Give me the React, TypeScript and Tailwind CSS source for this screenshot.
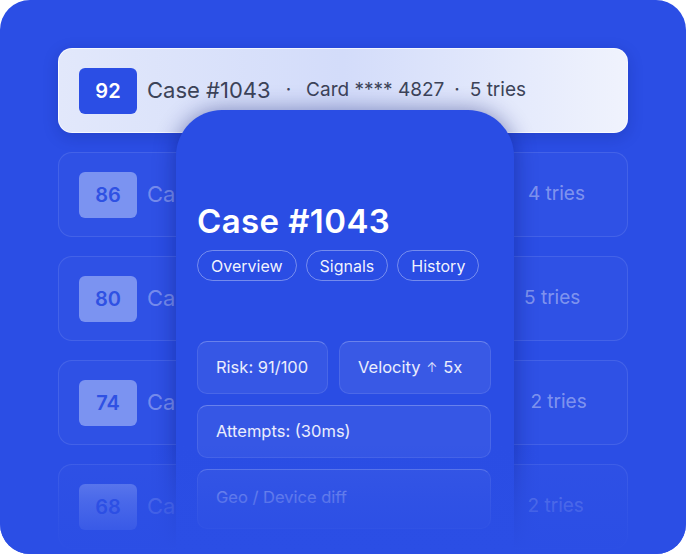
import React from 'react'

type Row = {
  score: number
  caseNo: string
  card: string
  cardWidth: string
  tries: string
}

// the middle of these rows sits behind the detail panel
const rows: Row[] = [
  { score: 86, caseNo: 'Case #1042', card: 'Card **** 3391 · Geo', cardWidth: 'w-[226px]', tries: '4 tries' },
  { score: 80, caseNo: 'Case #1041', card: 'Card **** 7710 · Geo', cardWidth: 'w-[227px]', tries: '5 tries' },
  { score: 74, caseNo: 'Case #1040', card: 'Card **** 5502 · Geo', cardWidth: 'w-[228px]', tries: '2 tries' },
  { score: 68, caseNo: 'Case #1039', card: 'Card **** 1184 · Geo', cardWidth: 'w-[226px]', tries: '2 tries' },
]

export default function App() {
  return (
    <div
      className="w-[686px] h-[554px] bg-white"
      style={{ fontFamily: 'Inter, "Noto Sans", sans-serif' }}
    >
      <div className="relative w-full h-full overflow-hidden rounded-[30px] bg-[#2b4ee5]">
        {/* case list */}
        <div className="flex flex-col gap-[19px] px-[58px] pt-[48px]">
          <div className="flex h-[85px] items-center rounded-[14px] border border-white/70 bg-gradient-to-r from-[#e2e8fb] via-[#d3dcfa] to-[#f0f3fd] px-[20px] shadow-[0_4px_16px_rgba(10,20,90,0.2)]">
            <div className="flex h-[46px] w-[58px] shrink-0 items-center justify-center rounded-[6px] bg-[#2b4ee5] text-[20px] font-semibold text-white">
              92
            </div>
            <div className="ml-[10px] flex items-center whitespace-nowrap text-[19px] text-[#3c4358]">
              <span className="text-[22px]">Case #1043</span>
              <span className="mx-[15px]">·</span>
              <span>Card **** 4827</span>
              <span className="mx-[10px]">·</span>
              <span>5 tries</span>
            </div>
          </div>

          {rows.map((r) => (
            <div
              key={r.score}
              className="flex h-[85px] shrink-0 items-center rounded-[14px] border border-white/10 bg-white/[0.02] px-[20px]"
            >
              <div className="flex h-[46px] w-[58px] shrink-0 items-center justify-center rounded-[6px] bg-[#7b93f1] text-[20px] font-semibold text-[#2f51e3]">
                {r.score}
              </div>
              <div className="ml-[10px] flex items-center whitespace-nowrap text-[19px] text-white/35">
                <span className="text-[22px]">{r.caseNo}</span>
                <span className="mx-[13px]">·</span>
                <span className={`${r.cardWidth} shrink-0 overflow-hidden`}>{r.card}</span>
                <span className="text-white/40">{r.tries}</span>
              </div>
            </div>
          ))}
        </div>

        {/* detail panel */}
        <div className="absolute left-[176px] top-[110px] h-[444px] w-[338px] rounded-t-[46px] bg-[#2a4de4] px-[21px] pt-[90px] shadow-[0_0_22px_rgba(8,20,110,0.45)]">
          <h2 className="text-[33px] font-semibold leading-[42px] tracking-[0.4px] text-white">Case #1043</h2>
          <div className="mt-[8px] flex gap-[9px]">
            {['Overview', 'Signals', 'History'].map((t) => (
              <span
                key={t}
                className="flex h-[31px] items-center rounded-full border border-white/35 px-[13px] text-[16px] text-white/95"
              >
                {t}
              </span>
            ))}
          </div>

          <div className="mt-[60px] flex w-[294px] flex-col gap-[11px]">
            <div className="flex gap-[11px]">
              <div className="flex h-[53px] w-[131px] items-center rounded-[10px] border border-white/10 border-t-white/25 bg-white/[0.06] px-[18px] text-[16.5px] text-white/90">
                Risk: 91/100
              </div>
              <div className="flex h-[53px] flex-1 items-center rounded-[10px] border border-white/10 border-t-white/25 bg-white/[0.07] px-[18px] text-[16.5px] text-white/90">
                Velocity <span className="mx-[6px] text-[13px] font-light">↑</span> 5x
              </div>
            </div>
            <div className="flex h-[53px] items-center rounded-[10px] border border-white/10 border-t-white/25 bg-white/[0.06] px-[18px] text-[16.5px] text-white/90">
              Attempts: (30ms)
            </div>
            <div className="flex h-[60px] items-start rounded-[10px] border border-white/10 border-t-white/25 bg-white/[0.06] px-[18px] pt-[15px] text-[16.5px] text-white/55">
              Geo / Device diff
            </div>
          </div>
        </div>

        {/* bottom fade */}
        <div className="pointer-events-none absolute inset-x-0 bottom-0 h-[110px] bg-gradient-to-b from-[#2b4ee5]/0 via-[#2b4ee5]/60 to-[#2b4ee5]" />
      </div>
    </div>
  )
}
